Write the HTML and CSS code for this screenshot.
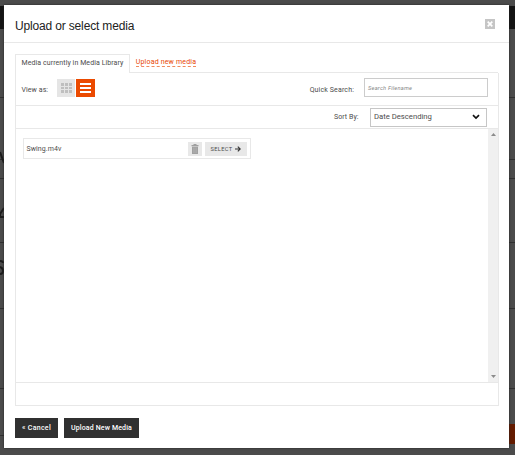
FILE: index.html
```html
<!DOCTYPE html>
<html lang="en">
<head>
<meta charset="utf-8">
<title>Upload or select media</title>
<link rel="stylesheet" href="styles.css">
</head>
<body>
<div class="backdrop">
  <i class="strip strip-left"></i><i class="strip strip-right"></i>
  <i class="rule r1"></i><i class="rule r2"></i><i class="rule r3"></i><i class="rule r4"></i><i class="rule r5"></i><i class="rule r6"></i><i class="rule r7"></i>
  <svg class="marks" width="4" height="130" viewBox="0 0 4 130" fill="none" stroke="#1c1c1c" stroke-width="2"><path d="M0 4 4 15M4 60 0 66V69H4M0 113Q3 113 3 115M0 119Q3 120 3 123T0 126"/></svg>
  <i class="backdrop-button"></i>
</div>
<section class="dialog">
  <header class="header">
    <h1><span>Upload or select media</span></h1>
    <button class="close" aria-label="Close"><svg width="10" height="10" viewBox="0 0 10 10"><path d="M2.7 2.7 7.3 7.3M7.3 2.7 2.7 7.3" stroke="#fff" stroke-width="1.7"/></svg></button>
  </header>
  <nav class="tabs">
    <span class="tab"><span class="tab-label">Media currently in Media Library</span></span>
    <span class="tab-rest"><a class="upload-link">Upload new media</a></span>
  </nav>
  <main class="panel">
    <div class="toolbar">
      <span class="view-label">View as:</span>
      <span class="view grid"><svg width="18" height="18" viewBox="0 0 18 18" fill="#bfbfbf"><path d="M4 4h3v3H4zM8 4h3v3H8zM12 4h3v3h-3zM4 8h3v2H4zM8 8h3v2H8zM12 8h3v2h-3zM4 11h3v3H4zM8 11h3v3H8zM12 11h3v3h-3z"/></svg></span>
      <span class="view list"><svg width="19" height="18" viewBox="0 0 19 18" fill="#fff"><path d="M4 4h11v2H4zM4 8h11v2H4zM4 12h11v2H4z"/></svg></span>
      <label class="search-label">Quick Search:</label>
      <div class="search"><span>Search Filename</span></div>
    </div>
    <div class="sortbar">
      <label class="sort-label">Sort By:</label>
      <div class="select"><span>Date Descending</span><svg width="8" height="6" viewBox="0 0 8 6"><path d="M1 1.2 4 4 7 1.2" fill="none" stroke="#111" stroke-width="1.7"/></svg></div>
    </div>
    <div class="content">
      <div class="items">
        <div class="item">
          <span class="filename">Swing.m4v</span>
          <span class="trash"><svg width="8" height="10" viewBox="0 0 8 10"><path d="M2.5 0h3v1H7.500v1.200H.5V1h2zM1 2.700h6V10H1z" fill="#a0a0a0"/><path d="M2.700 3.500v5.500M4 3.500v5.500M5.300 3.500v5.500" stroke="#bbb" stroke-width=".5"/></svg></span>
          <span class="choose"><span>SELECT</span><svg width="6" height="6" viewBox="0 0 6 6"><path d="M0 3h5M2.800.7 5.200 3 2.800 5.300" fill="none" stroke="#333" stroke-width="1.100"/></svg></span>
        </div>
      </div>
      <div class="scrollbar">
        <svg width="5" height="3" viewBox="0 0 5 3"><path d="M0 3 2.500 0 5 3z" fill="#8b8b8b"/></svg>
        <svg width="5" height="3" viewBox="0 0 5 3"><path d="M0 0h5L2.500 3z" fill="#8b8b8b"/></svg>
      </div>
    </div>
    <div class="status"></div>
  </main>
  <footer class="actions">
    <button class="cancel"><span>« Cancel</span></button>
    <button class="upload"><span>Upload New Media</span></button>
  </footer>
</section>
</body>
</html>
```
FILE: styles.css
```css
* { box-sizing: border-box; }
body { margin: 0; width: 515px; height: 455px; overflow: hidden; padding: 5px 6px 7px 4px; background: #4b4b4b; font: 7px/10px Roboto, "Liberation Sans", sans-serif; color: #4c4c4c; }
button { border: 0; padding: 0; font: inherit; display: flex; align-items: center; justify-content: center; }
svg { display: block; flex: none; }
span, a, label { white-space: nowrap; }
.backdrop { position: absolute; inset: 0; overflow: hidden; }
.strip { position: absolute; top: 6px; height: 23px; width: 6px; background: #141414; }
.strip-left { left: 0; }
.strip-right { right: 0; }
.rule { position: absolute; left: 0; width: 515px; height: 1px; background: #303030; }
.r1 { top: 97px; } .r2 { top: 159px; } .r3 { top: 178px; } .r4 { top: 242px; } .r5 { top: 308px; } .r6 { top: 388px; } .r7 { top: 435px; }
.marks { position: absolute; left: 0; top: 148px; }
.backdrop-button { position: absolute; right: 0; top: 424px; width: 6px; height: 20px; background: #641b00; }
.dialog { position: relative; height: 443px; background: #fff; padding: 0 11px; box-shadow: 0 0 2px #222; display: flex; flex-direction: column; }
.header { height: 38px; flex: none; margin: 0 -11px; padding: 0 14px 0 11px; border-bottom: 1px solid #e8e8e8; display: flex; justify-content: space-between; align-items: center; }
h1 { margin: 5px 0 0; font: 12px/16px "Liberation Sans", sans-serif; color: #222; letter-spacing: -.16px; }
.close { width: 10px; height: 10px; background: #c5c5c5; margin-top: 1px; }
.tabs { display: flex; height: 19px; flex: none; margin-top: 11px; }
.tab { width: 115px; border: 1px solid #e8e8e8; border-bottom: 0; padding: 3px 0 0 5.500px; letter-spacing: .08px; }
.tab-rest { width: 369px; border-bottom: 1px solid #e8e8e8; padding: 3px 0 0 6px; letter-spacing: .18px; }
.upload-link { display: inline-block; height: 10px; color: #e84600; border-bottom: 1px dashed #f08a5c; }
.panel { width: 484px; height: 333px; border: 1px solid #e8e8e8; border-top: 0; display: flex; flex-direction: column; flex: none; }
.toolbar { display: flex; align-items: center; height: 33px; flex: none; padding: 0 10px 3px 5.500px; border-bottom: 1px solid #e8e8e8; }
.view-label { width: 35.500px; padding-top: 4px; letter-spacing: .08px; }
.view.grid { background: #e5e5e5; width: 18px; }
.view.list { background: #eb4a00; margin-left: 1px; }
.search-label { margin-left: auto; margin-right: 10px; padding-top: 4px; letter-spacing: .14px; }
.search { width: 124px; height: 19px; border: 1px solid #ccc; padding: 3px; font-size: 5.700px; font-style: italic; line-height: 12px; color: #888; letter-spacing: .22px; }
.sortbar { display: flex; align-items: center; justify-content: flex-end; height: 23px; flex: none; padding-right: 11px; border-bottom: 1px solid #e8e8e8; }
.sort-label { margin-right: 11.500px; letter-spacing: .05px; }
.select { width: 117px; height: 19px; border: 1px solid #c6c6c6; padding: 0 6px 0 3px; display: flex; align-items: center; justify-content: space-between; font-size: 7.700px; }
.content { height: 253px; flex: none; display: flex; }
.items { flex: 1; padding: 9px 0 0 6.500px; }
.item { width: 228px; height: 21px; border: 1px solid #e8e8e8; padding: 0 3px; display: flex; align-items: center; }
.filename { margin-right: auto; letter-spacing: .08px; }
.trash { width: 14px; height: 14px; background: #e8e8e8; display: grid; place-items: center; margin-right: 3px; }
.choose { width: 42px; height: 14px; background: #e8e8e8; display: flex; align-items: center; justify-content: center; gap: 2px; font-size: 5.700px; letter-spacing: .38px; }
.scrollbar { width: 10px; background: #f0f0f0; display: flex; flex-direction: column; justify-content: space-between; align-items: center; padding: 4px 0; }
.status { flex: 1; border-top: 1px solid #e8e8e8; }
.actions { display: flex; gap: 6px; margin-top: 12px; }
.actions button { height: 20px; background: #303030; color: #fff; font-weight: 500; letter-spacing: .14px; padding-bottom: 1px; }
.cancel { width: 43px; }
.actions .cancel { letter-spacing: .3px; }
.upload { width: 75px; }
```
